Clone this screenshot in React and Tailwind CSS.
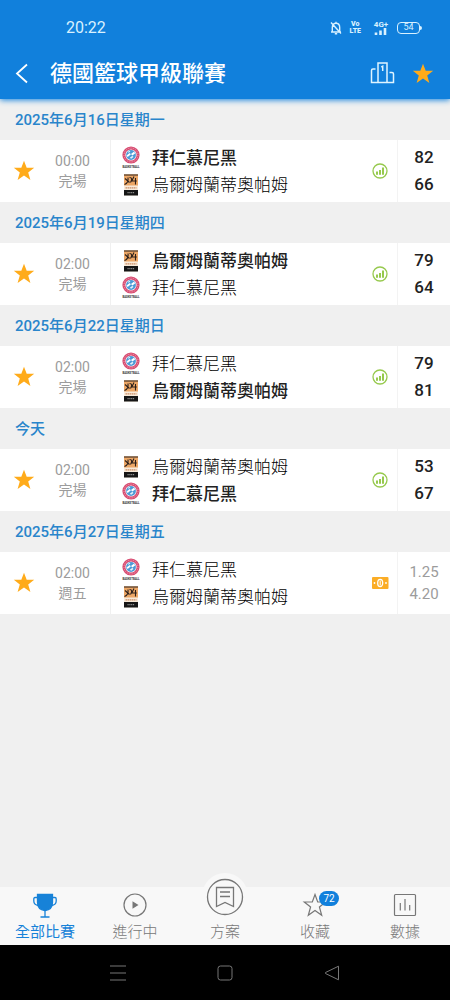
import { useState } from "react";

const BAYERN = "拜仁慕尼黑";
const ULM = "烏爾姆蘭蒂奧帕姆";

const groups = [
    { date: "2025年6月16日星期一", time: "00:00", status: "完場", teams: [[BAYERN, "82", true], [ULM, "66", false]] },
    { date: "2025年6月19日星期四", time: "02:00", status: "完場", teams: [[ULM, "79", true], [BAYERN, "64", false]] },
    { date: "2025年6月22日星期日", time: "02:00", status: "完場", teams: [[BAYERN, "79", false], [ULM, "81", true]] },
    { date: "今天", time: "02:00", status: "完場", teams: [[ULM, "53", false], [BAYERN, "67", true]] },
    { date: "2025年6月27日星期五", time: "02:00", status: "週五", odds: true, teams: [[BAYERN, "1.25", false], [ULM, "4.20", false]] },
];

const Star = ({ size = 22 }) => (
    <svg width={size} height={size} viewBox="0 0 22 22" fill="#ffab1a" aria-hidden="true">
        <path d="M11 .8l2.7 7h7.5l-6 4.6 2.2 7.6L11 15.4 4.6 20l2.2-7.6-6-4.6h7.5z" />
    </svg>
);

const BayernLogo = () => (
    <svg width="18" height="24" viewBox="0 0 18 24" aria-hidden="true">
        <circle cx="9" cy="9" r="8.6" fill="#d84a70" />
        <circle cx="9" cy="9" r="7" fill="none" stroke="#eba3b7" strokeWidth="1" strokeDasharray="1.2 1.1" />
        <circle cx="9" cy="9" r="5.6" fill="#fff" />
        <circle cx="9" cy="9" r="4.9" fill="#4d9ad6" />
        <path d="M4.500 9.600l3.200-2.600 1.200 1.200-3.200 2.700zM9 8l2.800-2.300 1.500 1.600-2.900 2.200z" fill="#fff" />
        <path d="M7.800 11.800l2.600-2 1.100 1.200-2.300 1.800zM5.800 6l1.800-1.300.8.8-1.700 1.300z" fill="#e4f1fa" />
        <text x="9" y="22.4" textAnchor="middle" fontSize="2.8" fontWeight="700" fill="#333" fontFamily="Roboto, sans-serif">BASKETBALL</text>
    </svg>
);

const UlmLogo = () => (
    <svg width="18" height="22" viewBox="0 0 18 22" aria-hidden="true">
        <path d="M2 0h14v21.500H2z" fill="#f8ead9" />
        <path d="M2 .5h14v11H2z" fill="#eda766" />
        <path d="M2 1h14" stroke="#2b201b" strokeWidth="1" />
        <path d="M2.500 10.500c3-1 4-3.500 3.500-7M3 4.500l4.500 4M7.500 3.500c3 0 2.500 2.500 1 5M12 2.500L9.800 7h5M13.500 4v6.500" fill="none" stroke="#2b201b" strokeWidth="1.1" />
        <path d="M3.500 13.800h11" stroke="#c98e68" strokeWidth="1.2" strokeDasharray="1.500 .5" />
        <path d="M2 16h14v5.500H2z" fill="#161616" />
        <path d="M5.500 18.700h7" stroke="#aaa" strokeWidth="1" strokeDasharray="1.200 .6" />
    </svg>
);

const StatsIcon = () => (
    <svg width="16" height="16" viewBox="0 0 16 16" fill="none" stroke="#96c94d" aria-hidden="true">
        <circle cx="8" cy="8" r="7" strokeWidth="1.300" />
        <path d="M5 11.800V8.500M8 11.800V7M11 11.800V4.600" strokeWidth="2" />
    </svg>
);

const CashIcon = () => (
    <svg width="18" height="14" viewBox="0 0 18 14" aria-hidden="true">
        <rect x="1" y="1" width="16.500" height="12" rx="1" fill="#fbad26" />
        <ellipse cx="9.200" cy="7" rx="2.500" ry="3.700" fill="none" stroke="#fff" strokeWidth="1.300" />
        <path d="M9.200 4.500v5" stroke="#fff" strokeWidth="1" />
        <circle cx="3.500" cy="7" r=".9" fill="#fff" />
        <circle cx="15" cy="7" r=".9" fill="#fff" />
    </svg>
);

const StatusBar = () => (
    <div className="flex h-12 items-center justify-between pt-2 pr-7 pl-[66px] text-[#d9f1ff]">
        <span className="text-base">20:22</span>
        <div className="flex items-center gap-2">
            <svg width="12" height="14" viewBox="0 0 12 14" fill="none" stroke="currentColor" strokeWidth="1.400" aria-hidden="true">
                <path d="M1 11h10M2.300 11V6.500C2.300 3.500 4 2.300 6 2.300s3.700 1.200 3.700 4.200V11M6 .8v1.500M4.800 12.800h2.400M1 1.500l10 11" />
            </svg>
            <div className="flex flex-col items-center text-[7px] leading-[7px] font-black">
                <span>Vo</span>
                <span>LTE</span>
            </div>
            <div className="ml-1 flex flex-col items-center text-[8px] leading-[7px] font-bold">
                <span>4G+</span>
                <svg width="16" height="7" viewBox="0 0 16 7" stroke="currentColor" strokeWidth="2.600" aria-hidden="true">
                    <path d="M3 7V4.500M7.500 7V2.500M12 7V0" />
                </svg>
            </div>
            <div className="flex items-center">
                <span className="flex h-3 w-[23px] items-center justify-center rounded-sm border border-current text-[9px]">54</span>
                <span className="h-1 w-0.5 rounded-r-sm bg-current" />
            </div>
        </div>
    </div>
);

const MatchRow = ({ match }) => {
    const [saved, setSaved] = useState(true);

    return (
        <article className="flex h-[62px] bg-white">
            <div className="flex w-[111px] items-center border-r border-[#f0f0f0] pl-[13px]">
                <button className={saved ? "" : "opacity-30"} aria-label="收藏" onClick={() => setSaved(prev => !prev)}><Star /></button>
                <div className="flex-1 text-center text-sm text-[#9c9c9c]">
                    <p>{match.time}</p>
                    <p>{match.status}</p>
                </div>
            </div>
            <ul className="flex flex-1 flex-col justify-center pl-[11px]">
                {match.teams.map(([name, , bold]) => (
                    <li key={name} className="flex h-[27px] items-center gap-3 text-[17px]">
                        {name === BAYERN ? <BayernLogo /> : <UlmLogo />}
                        <span className={bold ? "pt-0.5 font-medium text-[#222]" : "pt-0.5 font-light text-black"}>{name}</span>
                    </li>
                ))}
            </ul>
            <div className="flex w-[34px] items-center justify-center">
                {match.odds ? <CashIcon /> : <StatsIcon />}
            </div>
            <div className="flex w-[53px] flex-col justify-center border-l border-[#f3f3f3] text-center">
                {match.teams.map(([name, value]) => (
                    <span key={name} className={match.odds ? "text-[15px] leading-[22px] text-[#9c9c9c]" : "text-[17px] leading-[27px] font-medium text-[#222]"}>{value}</span>
                ))}
            </div>
        </article>
    );
};

const TabItem = ({ label, active, children }) => (
    <a href="#" aria-current={active ? "page" : undefined} className={`flex flex-1 flex-col items-center justify-end text-[15px] leading-[26px] ${active ? "text-[#1782d8]" : "font-light text-[#777]"}`}>
        {children}
        <span>{label}</span>
    </a>
);

export default function App() {
    return (
        <div className="flex min-h-screen flex-col bg-[#f0f0f0] font-[Roboto,'Noto_Sans_CJK_TC',sans-serif]">
            <header className="relative bg-[#1180dc] shadow-[0_1px_6px_#1180dc]">
                <StatusBar />
                <div className="flex h-[51px] items-center pr-4 pl-[15px] text-white">
                    <button aria-label="返回" className="mr-[21px]">
                        <svg width="14" height="22" viewBox="0 0 14 22" fill="none" stroke="currentColor" strokeWidth="1.800" aria-hidden="true">
                            <path d="M12 1.500L2 10.500l10 9" />
                        </svg>
                    </button>
                    <h1 className="flex-1 text-[22px] font-medium">德國籃球甲級聯賽</h1>
                    <button aria-label="排名" className="mr-[17px]">
                        <svg width="25" height="23" viewBox="0 0 25 23" fill="none" stroke="#e0f4ff" strokeWidth="1.500" aria-hidden="true">
                            <path d="M8 20.500V1h9v19.500M5.500 7H3Q1.500 7 1.500 8.500v12h22V12q0-1.500-1.500-1.500h-2.500M11.300 5l1.400-.8V9" />
                        </svg>
                    </button>
                    <button aria-label="收藏聯賽"><Star /></button>
                </div>
            </header>

            <main className="flex-1">
                {groups.map(group => (
                    <section key={group.date}>
                        <h2 className="flex h-[41px] items-center pt-0.5 pl-[15px] text-[15px] font-medium text-[#2985cb]">{group.date}</h2>
                        <MatchRow match={group} />
                    </section>
                ))}
            </main>

            <footer className="sticky bottom-0">
                <nav className="flex h-[58px] bg-[#f8f8f8]">
                    <TabItem label="全部比賽" active>
                        <svg className="shrink-0" width="26" height="27" viewBox="0 0 26 27" fill="none" stroke="currentColor" strokeWidth="1.300" aria-hidden="true">
                            <path d="M5.500 2.500h15v8c0 5-3 7.500-7.500 8.200-4.500-.7-7.500-3.200-7.500-8.200z" fill="currentColor" />
                            <path d="M5.500 5.500H3Q1.800 5.500 1.800 7v2q0 4 4.800 4.500M20.500 5.500H23q1.200 0 1.200 1.500v2q0 4-4.800 4.500M13 18v6.500M8.500 25h9" />
                        </svg>
                    </TabItem>
                    <TabItem label="進行中">
                        <svg className="shrink-0" width="26" height="28" viewBox="0 0 26 28" fill="none" stroke="currentColor" strokeWidth="1.200" aria-hidden="true">
                            <circle cx="13" cy="14" r="11" />
                            <path d="M10.500 10.200v7.600l6-3.800z" fill="currentColor" stroke="none" />
                        </svg>
                    </TabItem>
                    <TabItem label="方案">
                        <svg className="shrink-0" width="46" height="46" viewBox="0 0 46 46" fill="none" stroke="currentColor" strokeWidth="1.300" aria-hidden="true">
                            <circle cx="23" cy="23" r="23" fill="#f8f8f8" stroke="none" />
                            <circle cx="23" cy="24" r="17.500" />
                            <path d="M14.500 14.500h17v19L23 29.500l-8.500 4zM18 19h10M18 23.500h10" />
                        </svg>
                    </TabItem>
                    <TabItem label="收藏">
                        <span className="relative">
                            <svg width="26" height="28" viewBox="0 0 26 28" fill="none" stroke="currentColor" strokeWidth="1.200" aria-hidden="true">
                                <path d="M13 3.500l2.700 7.500h8l-6.300 5 2.300 8.300L13 19.500l-6.700 4.800L8.600 16l-6.300-5h8z" />
                            </svg>
                            <span className="absolute top-0 left-[17px] h-[15px] w-5 rounded-full bg-[#1180dc] text-center text-[10px] leading-[15px] font-normal text-white">72</span>
                        </span>
                    </TabItem>
                    <TabItem label="數據">
                        <svg className="shrink-0" width="26" height="28" viewBox="0 0 26 28" fill="none" stroke="currentColor" strokeWidth="1.200" aria-hidden="true">
                            <rect x="2.500" y="3.500" width="21" height="21" rx="1" />
                            <path d="M8.300 12v7.500M13 8v11.500M17.700 14v5.500" />
                        </svg>
                    </TabItem>
                </nav>
                <div className="flex h-[55px] items-center justify-center gap-[91px] bg-black text-[#777]">
                    <button aria-label="選單">
                        <svg width="16" height="16" viewBox="0 0 16 16" stroke="currentColor" aria-hidden="true">
                            <path d="M0 1h16M0 8h16M0 15h16" />
                        </svg>
                    </button>
                    <button aria-label="主畫面">
                        <svg width="16" height="16" viewBox="0 0 16 16" fill="none" stroke="currentColor" aria-hidden="true">
                            <rect x="1" y="1" width="14" height="14" rx="2.500" />
                        </svg>
                    </button>
                    <button aria-label="上一頁">
                        <svg width="16" height="16" viewBox="0 0 16 16" fill="none" stroke="currentColor" strokeLinejoin="round" aria-hidden="true">
                            <path d="M14.500 1.200v13.600L1.500 8.500V7.500z" />
                        </svg>
                    </button>
                </div>
            </footer>
        </div>
    );
}
